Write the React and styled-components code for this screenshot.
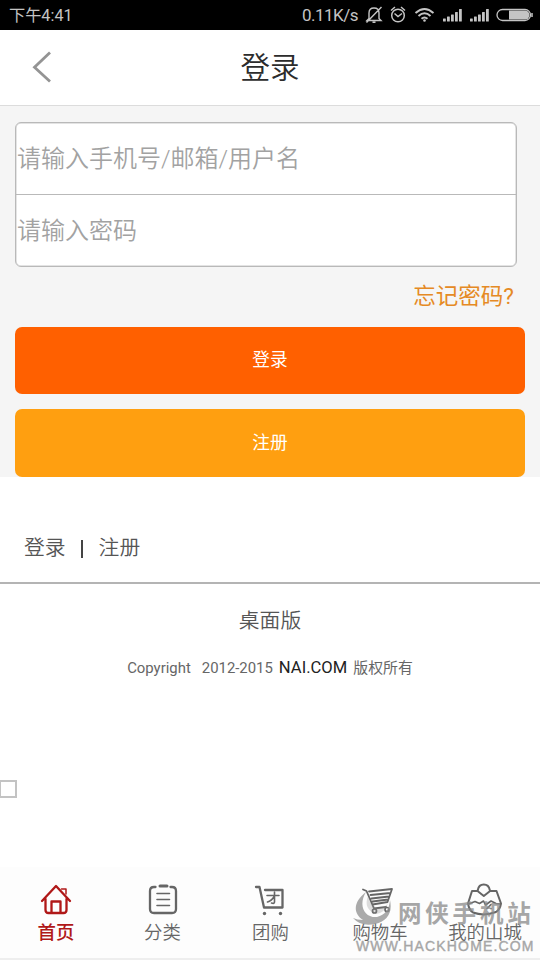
import React from "react";
import styled, { createGlobalStyle } from "styled-components";

const GlobalStyle = createGlobalStyle`
  * { box-sizing: border-box; }
  body {
    margin: 0;
    background: #fff;
    font-family: Roboto, "Noto Sans CJK SC", sans-serif;
  }
`;

const Page = styled.div`
  position: relative;
  width: 540px;
  height: 960px;
  display: flex;
  flex-direction: column;
  overflow: hidden;
  background: #fff;
`;

const StatusBar = styled.div`
  height: 30px;
  flex: none;
  display: flex;
  align-items: center;
  justify-content: space-between;
  padding: 0 7px 0 9px;
  background: #000;
  color: #c4c4c4;
  font-size: 17px;
  line-height: 30px;
`;

const Clock = styled.span`
  padding-top: 1px;
  font-size: 16.2px;
`;

const StatusIcons = styled.svg`
  display: block;
  width: 174px;
  height: 30px;
`;

const StatusGroup = styled.div`
  display: flex;
  align-items: center;
`;

const Speed = styled.span`
  margin-right: 1px;
  letter-spacing: -0.5px;
`;

const Header = styled.header`
  height: 76px;
  flex: none;
  display: grid;
  grid-template-columns: 84px 1fr 84px;
  align-items: center;
  border-bottom: 1px solid #dcdcdc;
`;

const BackIcon = styled.svg`
  width: 84px;
  height: 74px;
`;

const Title = styled.h1`
  margin: 0;
  text-align: center;
  font-size: 29.5px;
  font-weight: 350;
  line-height: 74px;
  color: #2c2c2c;
`;

const LoginPanel = styled.main`
  height: 371px;
  flex: none;
  display: flex;
  flex-direction: column;
  padding: 16px 15px 0;
  background: #f5f5f5;
`;

const FieldGroup = styled.div`
  width: 502px;
  height: 145px;
  flex: none;
  border: 1px solid #b9b9b9;
  border-radius: 6px;
  background: #fff;
  box-shadow: inset 0 0 0 0.5px #c8c8c8;
`;

const Field = styled.label`
  display: block;
  height: ${(p) => (p.$divided ? 72 : 71)}px;
  padding: 0 1px;
  border-bottom: ${(p) => (p.$divided ? "1px solid #b9b9b9" : "none")};
  font-size: 24px;
  font-weight: 350;
  line-height: 72px;
  color: #a2a2a2;
`;

const Forgot = styled.a`
  align-self: flex-end;
  height: 60px;
  flex: none;
  padding-right: 11px;
  font-size: 22.5px;
  font-weight: 400;
  line-height: 58px;
  color: #e58a24;
`;

const Button = styled.button`
  height: ${(p) => p.$height}px;
  flex: none;
  margin: 0 0 15px;
  padding: 0;
  border: 0;
  border-radius: 7px;
  background: ${(p) => p.$color};
  color: #fff;
  font-family: inherit;
  font-size: 17.7px;
  line-height: 65px;
`;

const AccountLinks = styled.div`
  height: 107px;
  flex: none;
  display: flex;
  align-items: center;
  padding: 36px 0 0 24px;
  border-bottom: 2px solid #b4b4b4;
  font-size: 20.8px;
  font-weight: 350;
  line-height: 30px;
  color: #555;
`;

const Separator = styled.span`
  width: 2px;
  height: 18px;
  margin: 3px 16px 0 15px;
  background: #444;
`;

const DesktopLink = styled.a`
  height: 72px;
  flex: none;
  text-align: center;
  font-size: 20.8px;
  font-weight: 350;
  line-height: 75px;
  color: #555;
`;

const Copyright = styled.div`
  flex: none;
  display: flex;
  justify-content: center;
  align-items: baseline;
  height: 22px;
  font-size: 14.9px;
  line-height: 23px;
  color: #666;
`;

const Years = styled.span`
  margin: 0 6px 0 11px;
`;

const SiteName = styled.strong`
  margin-right: 6px;
  font-size: 16.6px;
  font-weight: 400;
  color: #222;
`;

const EmptyBox = styled.div`
  width: 17px;
  height: 18px;
  flex: none;
  margin-top: 102px;
  border: 2px solid #c3c3c3;
  border-left-width: 1px;
`;

const TabBar = styled.nav`
  height: 93px;
  flex: none;
  display: grid;
  grid-template-columns: 112px 101px 115px 104px 106px;
  margin-top: auto;
  border-bottom: 2px solid #eee;
  background: #fdfdfd;
`;

const Tab = styled.a`
  display: flex;
  flex-direction: column;
  align-items: center;
  padding-top: 14px;
  color: ${(p) => (p.$active ? "#b01818" : "#666")};
  font-size: 18.4px;
  font-weight: ${(p) => (p.$active ? 500 : 350)};
  line-height: 28px;
  white-space: nowrap;
`;

const TabIcon = styled.svg`
  display: block;
  width: 36px;
  height: 38px;
  fill: none;
  stroke: currentColor;
  stroke-width: 2.3;
  stroke-linecap: round;
  stroke-linejoin: round;
`;

const Watermark = styled.div`
  position: absolute;
  left: 350px;
  top: 884px;
  width: 190px;
  height: 74px;
  display: grid;
  grid-template-columns: 48px 1fr;
  grid-template-rows: 51px 20px;
  color: #8a8a8a;
  opacity: 0.75;
  pointer-events: none;
`;

const Swirl = styled.svg`
  width: 47px;
  height: 51px;
`;

const WatermarkName = styled.span`
  font-size: 23.5px;
  font-weight: 700;
  letter-spacing: 3.8px;
  line-height: 60px;
  white-space: nowrap;
`;

const WatermarkUrl = styled.span`
  grid-column: 1 / 3;
  padding-left: 6px;
  font-family: "Liberation Sans", Arial, sans-serif;
  font-size: 14px;
  -webkit-text-stroke: 0.4px #8a8a8a;
  letter-spacing: 1.15px;
  line-height: 22px;
  white-space: nowrap;
`;

const SignalBars = ({ x }) => (
  <g fill="#c4c4c4" stroke="none">
    {[3, 5, 7, 9.5, 12.5].map((h, i) => (
      <rect key={i} x={x + i * 4} y={21.5 - h} width="2.8" height={h} rx="0.5" />
    ))}
  </g>
);

const tabs = [
  {
    label: "首页",
    icon: (
      <>
        <path d="M4 20 18 5l14 15M7.5 18v11q0 3 3 3h15q3 0 3-3V18" />
        <path d="M13.5 31.5V20.5h9v11" />
        <path d="M23.5 8h4.5v5" strokeWidth="1.5" />
      </>
    ),
  },
  {
    label: "分类",
    icon: (
      <>
        <path d="M10.500 6H9Q5 6 5 10v18q0 4 4 4h18q4 0 4-4V10q0-4-4-4h-1.500" />
        <path d="M15 5h7" strokeWidth="3" />
        <path d="M12 12.500h12.500M12 18.500h12.500M12 24.500h12.500" strokeWidth="1.600" />
      </>
    ),
  },
  {
    label: "团购",
    icon: (
      <>
        <path d="M3 6h3.500L11 26.500H29.500V9H12" strokeWidth="2.300" />
        <path d="M14 14.500h12M21.500 11v10q0 2-3 1M21.500 15q-3 5-7 6" strokeWidth="1.600" />
        <circle cx="11.500" cy="32.500" r="1.700" fill="currentColor" stroke="none" />
        <circle cx="27.500" cy="32.500" r="1.700" fill="currentColor" stroke="none" />
      </>
    ),
  },
  {
    label: "购物车",
    icon: (
      <>
        <path d="M1 8.500 4.500 10 12 27.500 24 26M7 10.500 30 8l-4.500 13-15 2.500M8.500 14 28.500 12M9.500 17.500 27 15.500M10.500 20.500 26 18.500" strokeWidth="1.800" />
        <circle cx="12.500" cy="30" r="2" strokeWidth="1.700" />
        <circle cx="25" cy="28.500" r="2" strokeWidth="1.700" />
      </>
    ),
  },
  {
    label: "我的山城",
    icon: (
      <>
        <path d="M10.800 9C12 1.500 21.500 1.500 22.800 9" strokeWidth="2" />
        <path d="M5 10h5.500l6.300 5 6.300-5h6.400L34 22.500q-1 6-5 8.500-12 4.500-23 .5Q2 29 1 22.500z" strokeWidth="2" />
        <path d="M1.500 23 8 20.500l4.500 2 4-2.500 2 4 5.500-4 5 2.500 4.500.5M20 27.500l4-4M24 27.500v.2" strokeWidth="1.600" />
      </>
    ),
  },
];

export default function App() {
  return (
    <Page>
      <GlobalStyle />
      <StatusBar>
        <Clock>下午4:41</Clock>
        <StatusGroup>
          <Speed>0.11K/s</Speed>
          <StatusIcons viewBox="0 0 174 30" fill="none" stroke="#c4c4c4" strokeWidth="1.5">
            <path d="M10 18.500V13q0-5 5-5t5 5v5.500l2 2H8zM13.500 22.200h3M7.500 22.500 22.500 7" strokeWidth="1.400" />
            <circle cx="39" cy="15.500" r="6.300" />
            <path d="m35.500 13.500 3.500 3 4-3M32 10.500l4-3.500M46 10.500l-4-3.500" />
            <path d="M56.500 13q9-8 18 0M59.500 16q6-5.500 12 0M62.500 18.800q3-2.700 6 0" strokeWidth="1.900" />
            <circle cx="65.500" cy="20.500" r="1.300" fill="#c4c4c4" stroke="none" />
            <SignalBars x={84} />
            <SignalBars x={111} />
            <rect x="138" y="9.500" width="33.500" height="11" rx="5.500" strokeWidth="1.300" />
            <path d="M150 10.500h16a4.500 4.500 0 0 1 0 9H150z" fill="#c4c4c4" stroke="none" />
            <path d="M173 13v4" />
          </StatusIcons>
        </StatusGroup>
      </StatusBar>

      <Header>
        <BackIcon viewBox="0 0 84 74" fill="none" stroke="#949494" strokeWidth="2.800">
          <path d="M50 21.500 34.500 36.300 50 50.500" />
        </BackIcon>
        <Title>登录</Title>
      </Header>

      <LoginPanel>
        <FieldGroup>
          <Field $divided>请输入手机号/邮箱/用户名</Field>
          <Field>请输入密码</Field>
        </FieldGroup>
        <Forgot>忘记密码?</Forgot>
        <Button $color="#ff6000" $height={67}>登录</Button>
        <Button $color="#ff9f10" $height={68}>注册</Button>
      </LoginPanel>

      <AccountLinks>
        <span>登录</span>
        <Separator />
        <span>注册</span>
      </AccountLinks>
      <DesktopLink>桌面版</DesktopLink>
      <Copyright>
        <span>Copyright</span>
        <Years>2012-2015</Years>
        <SiteName>NAI.COM</SiteName>
        <span>版权所有</span>
      </Copyright>
      <EmptyBox />

      <TabBar>
        {tabs.map((tab, i) => (
          <Tab key={tab.label} $active={i === 0}>
            <TabIcon viewBox="0 0 36 38">{tab.icon}</TabIcon>
            {tab.label}
          </Tab>
        ))}
      </TabBar>

      <Watermark>
        <Swirl viewBox="0 0 47 51" fill="#8f8f8f">
          <path d="M16 8C4 17 2 29 13 36q-6 0-10-2 8 9 22 6 19-5 15-24-1 14-13 17C14 34 8 21 16 8z" />
          <path d="M18 12q-5 13 8 18 9-1 12-11-4 6-10 5-8-2-10-12z" opacity=".4" />
        </Swirl>
        <WatermarkName>网侠手机站</WatermarkName>
        <WatermarkUrl>WWW.HACKHOME.COM</WatermarkUrl>
      </Watermark>
    </Page>
  );
}
